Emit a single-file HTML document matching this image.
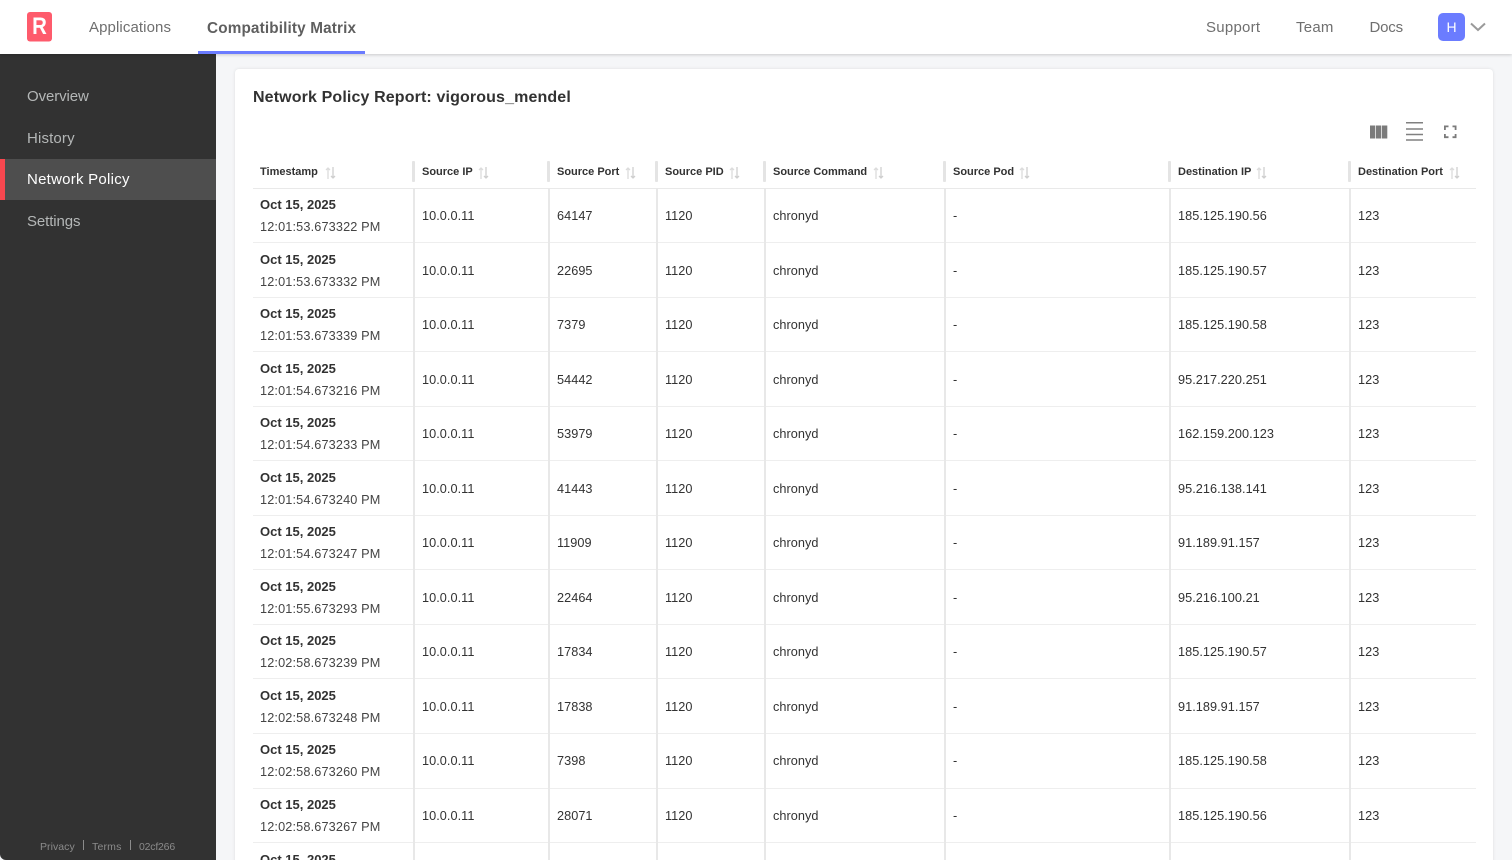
<!DOCTYPE html>
<html><head><meta charset="utf-8"><title>Network Policy</title>
<style>
*{box-sizing:border-box}
html,body{margin:0;padding:0;width:1512px;height:860px;overflow:hidden;background:#f5f6f8;font-family:"Liberation Sans",sans-serif}
#wrap{position:absolute;left:0;top:0;width:1512px;height:860px;overflow:hidden;background:#f5f6f8}
.a{position:absolute;white-space:nowrap}
#top{position:absolute;left:0;top:0;width:1512px;height:54px;background:#fff;box-shadow:0 1px 3px rgba(0,0,0,.18);z-index:5}
.nav{font-size:15px;color:#6f6f6f;top:18px;line-height:19px;letter-spacing:.25px}
#side{position:absolute;left:0;top:54px;width:216px;height:806px;background:#323232;border-bottom-left-radius:6px;z-index:3}
.si{position:absolute;left:27px;font-size:15px;line-height:20px;color:#b4b7b7;white-space:nowrap}
.ft{position:absolute;font-size:10.5px;color:#8b8b8b;top:786px;line-height:14px;letter-spacing:.2px}
#card{position:absolute;left:235px;top:69px;width:1258px;height:830px;background:#fff;border-radius:4px;box-shadow:0 0 3px rgba(0,0,0,.1)}
table{position:absolute;left:253px;top:155px;width:1223px;border-collapse:collapse;table-layout:fixed;color:#323232}
th{height:33px;padding:2px 0 0 7px;text-align:left;font-size:11px;font-weight:bold;border-bottom:1px solid #e9e9e9;position:relative;color:#323232;white-space:nowrap}
th+th{padding-left:8px}
th+th:before{content:"";position:absolute;left:-2px;top:6px;width:3px;height:21px;background:#e4e4e4;border-radius:1px}
th svg{position:absolute;top:12px}
td{height:54.55px;padding:1.500px 0 0 7px;font-size:12.7px;letter-spacing:.05px;border-bottom:1px solid #eeeeee;white-space:nowrap;line-height:22px}
td+td{padding-left:7px;border-left:2px solid #e8e8e8}
td b{display:block;font-size:13px;letter-spacing:0}
td span{display:block;letter-spacing:.15px;color:#444}
</style></head><body>
<div id="wrap">
<div id="top">
<svg class="a" style="left:27px;top:12px" width="25" height="30" viewBox="0 0 25 30"><rect width="25" height="29.5" rx="3" fill="#fe5b6c"/></svg>
<div class="a" style="left:27px;top:12px;width:25px;height:30px;text-align:center;color:#fff;font-weight:bold;font-size:24px;line-height:30px;transform:scaleX(.85)">R</div>
<div class="a nav" style="left:89px;letter-spacing:.1px">Applications</div>
<div class="a nav" style="left:207px;top:18.500px;font-weight:bold;color:#5f5f5f;letter-spacing:.15px;font-size:15.3px">Compatibility Matrix</div>
<div class="a" style="left:198px;top:51px;width:167px;height:3px;background:#6b7cff"></div>
<div class="a nav" style="left:1206px">Support</div>
<div class="a nav" style="left:1296px">Team</div>
<div class="a nav" style="left:1369.5px;letter-spacing:-.2px">Docs</div>
<div class="a" style="left:1438px;top:13px;width:27px;height:28px;border-radius:5px;background:#6b7cff;color:#fff;font-size:14px;line-height:28px;text-align:center">H</div>
<svg class="a" style="left:1470px;top:22px" width="16" height="10" viewBox="0 0 16 10"><path d="M1 1.500 L8 8 L15 1.500" fill="none" stroke="#9a9a9a" stroke-width="2"/></svg>
</div>
<div id="side">
<div class="si" style="top:33px;letter-spacing:-.1px">Overview</div>
<div class="si" style="top:75px;letter-spacing:.15px">History</div>
<div class="a" style="left:0;top:104.500px;width:216px;height:41.500px;background:#4e4e4e"></div>
<div class="a" style="left:0;top:104.500px;width:5px;height:41.500px;background:#f7474f"></div>
<div class="si" style="top:116px;color:#fff;letter-spacing:.25px">Network Policy</div>
<div class="si" style="top:158px;letter-spacing:-.1px">Settings</div>
<div class="ft" style="left:40px;letter-spacing:.05px">Privacy</div>
<div class="a" style="left:83px;top:786px;width:1px;height:10px;background:#8b8b8b"></div>
<div class="ft" style="left:92px">Terms</div>
<div class="a" style="left:130px;top:786px;width:1px;height:10px;background:#8b8b8b"></div>
<div class="ft" style="left:139px;letter-spacing:-.2px">02cf266</div>
</div>
<div id="card"></div>
<div class="a" style="left:253px;top:88px;font-size:16px;line-height:20px;font-weight:bold;color:#323232;letter-spacing:.13px">Network Policy Report: vigorous_mendel</div>
<svg class="a" style="left:1370px;top:122px" width="90" height="20" viewBox="0 0 90 20">
<path d="M0 3.500h5.300v13H0zM6 3.500h5.300v13H6zM12 3.500h5.300v13H12z" fill="#7b7b7b"/>
<path d="M36 .8h17M36 7h17M36 12.500h17M36 18h17" stroke="#808080" stroke-width="1.500" fill="none"/>
<path d="M74.900 8V4.400h3.600M82.500 4.400h3.100V8M85.600 12v3.200h-3.100M78.500 15.200h-3.600V12" stroke="#7b7b7b" stroke-width="1.800" fill="none"/>
</svg>
<table>
<colgroup><col style="width:161px"><col style="width:135px"><col style="width:108px"><col style="width:108px"><col style="width:180px"><col style="width:225px"><col style="width:180px"><col style="width:126px"></colgroup>
<thead><tr>
<th>Timestamp<svg style="left:72px" width="12" height="12" viewBox="0 0 12 12"><path d="M3 12V1M1 3l2-2 2 2" stroke="#dcdcdc" stroke-width="1.300" fill="none"/><path d="M8 0v11M6 9l2 2 2-2" stroke="#cfcfcf" stroke-width="1.300" fill="none"/></svg></th>
<th>Source IP<svg style="left:64px" width="12" height="12" viewBox="0 0 12 12"><path d="M3 12V1M1 3l2-2 2 2" stroke="#dcdcdc" stroke-width="1.300" fill="none"/><path d="M8 0v11M6 9l2 2 2-2" stroke="#cfcfcf" stroke-width="1.300" fill="none"/></svg></th>
<th>Source Port<svg style="left:76px" width="12" height="12" viewBox="0 0 12 12"><path d="M3 12V1M1 3l2-2 2 2" stroke="#dcdcdc" stroke-width="1.300" fill="none"/><path d="M8 0v11M6 9l2 2 2-2" stroke="#cfcfcf" stroke-width="1.300" fill="none"/></svg></th>
<th>Source PID<svg style="left:72px" width="12" height="12" viewBox="0 0 12 12"><path d="M3 12V1M1 3l2-2 2 2" stroke="#dcdcdc" stroke-width="1.300" fill="none"/><path d="M8 0v11M6 9l2 2 2-2" stroke="#cfcfcf" stroke-width="1.300" fill="none"/></svg></th>
<th>Source Command<svg style="left:108px" width="12" height="12" viewBox="0 0 12 12"><path d="M3 12V1M1 3l2-2 2 2" stroke="#dcdcdc" stroke-width="1.300" fill="none"/><path d="M8 0v11M6 9l2 2 2-2" stroke="#cfcfcf" stroke-width="1.300" fill="none"/></svg></th>
<th>Source Pod<svg style="left:74px" width="12" height="12" viewBox="0 0 12 12"><path d="M3 12V1M1 3l2-2 2 2" stroke="#dcdcdc" stroke-width="1.300" fill="none"/><path d="M8 0v11M6 9l2 2 2-2" stroke="#cfcfcf" stroke-width="1.300" fill="none"/></svg></th>
<th>Destination IP<svg style="left:86px" width="12" height="12" viewBox="0 0 12 12"><path d="M3 12V1M1 3l2-2 2 2" stroke="#dcdcdc" stroke-width="1.300" fill="none"/><path d="M8 0v11M6 9l2 2 2-2" stroke="#cfcfcf" stroke-width="1.300" fill="none"/></svg></th>
<th>Destination Port<svg style="left:99px" width="12" height="12" viewBox="0 0 12 12"><path d="M3 12V1M1 3l2-2 2 2" stroke="#dcdcdc" stroke-width="1.300" fill="none"/><path d="M8 0v11M6 9l2 2 2-2" stroke="#cfcfcf" stroke-width="1.300" fill="none"/></svg></th>
</tr></thead>
<tbody>
<tr><td><b>Oct 15, 2025</b><span>12:01:53.673322 PM</span></td><td>10.0.0.11</td><td>64147</td><td>1120</td><td>chronyd</td><td>-</td><td>185.125.190.56</td><td>123</td></tr>
<tr><td><b>Oct 15, 2025</b><span>12:01:53.673332 PM</span></td><td>10.0.0.11</td><td>22695</td><td>1120</td><td>chronyd</td><td>-</td><td>185.125.190.57</td><td>123</td></tr>
<tr><td><b>Oct 15, 2025</b><span>12:01:53.673339 PM</span></td><td>10.0.0.11</td><td>7379</td><td>1120</td><td>chronyd</td><td>-</td><td>185.125.190.58</td><td>123</td></tr>
<tr><td><b>Oct 15, 2025</b><span>12:01:54.673216 PM</span></td><td>10.0.0.11</td><td>54442</td><td>1120</td><td>chronyd</td><td>-</td><td>95.217.220.251</td><td>123</td></tr>
<tr><td><b>Oct 15, 2025</b><span>12:01:54.673233 PM</span></td><td>10.0.0.11</td><td>53979</td><td>1120</td><td>chronyd</td><td>-</td><td>162.159.200.123</td><td>123</td></tr>
<tr><td><b>Oct 15, 2025</b><span>12:01:54.673240 PM</span></td><td>10.0.0.11</td><td>41443</td><td>1120</td><td>chronyd</td><td>-</td><td>95.216.138.141</td><td>123</td></tr>
<tr><td><b>Oct 15, 2025</b><span>12:01:54.673247 PM</span></td><td>10.0.0.11</td><td>11909</td><td>1120</td><td>chronyd</td><td>-</td><td>91.189.91.157</td><td>123</td></tr>
<tr><td><b>Oct 15, 2025</b><span>12:01:55.673293 PM</span></td><td>10.0.0.11</td><td>22464</td><td>1120</td><td>chronyd</td><td>-</td><td>95.216.100.21</td><td>123</td></tr>
<tr><td><b>Oct 15, 2025</b><span>12:02:58.673239 PM</span></td><td>10.0.0.11</td><td>17834</td><td>1120</td><td>chronyd</td><td>-</td><td>185.125.190.57</td><td>123</td></tr>
<tr><td><b>Oct 15, 2025</b><span>12:02:58.673248 PM</span></td><td>10.0.0.11</td><td>17838</td><td>1120</td><td>chronyd</td><td>-</td><td>91.189.91.157</td><td>123</td></tr>
<tr><td><b>Oct 15, 2025</b><span>12:02:58.673260 PM</span></td><td>10.0.0.11</td><td>7398</td><td>1120</td><td>chronyd</td><td>-</td><td>185.125.190.58</td><td>123</td></tr>
<tr><td><b>Oct 15, 2025</b><span>12:02:58.673267 PM</span></td><td>10.0.0.11</td><td>28071</td><td>1120</td><td>chronyd</td><td>-</td><td>185.125.190.56</td><td>123</td></tr>
<tr><td><b>Oct 15, 2025</b><span>12:02:58.673270 PM</span></td><td>10.0.0.11</td><td>28072</td><td>1120</td><td>chronyd</td><td>-</td><td>185.125.190.57</td><td>123</td></tr>
</tbody>
</table>
</div>
</body></html>
